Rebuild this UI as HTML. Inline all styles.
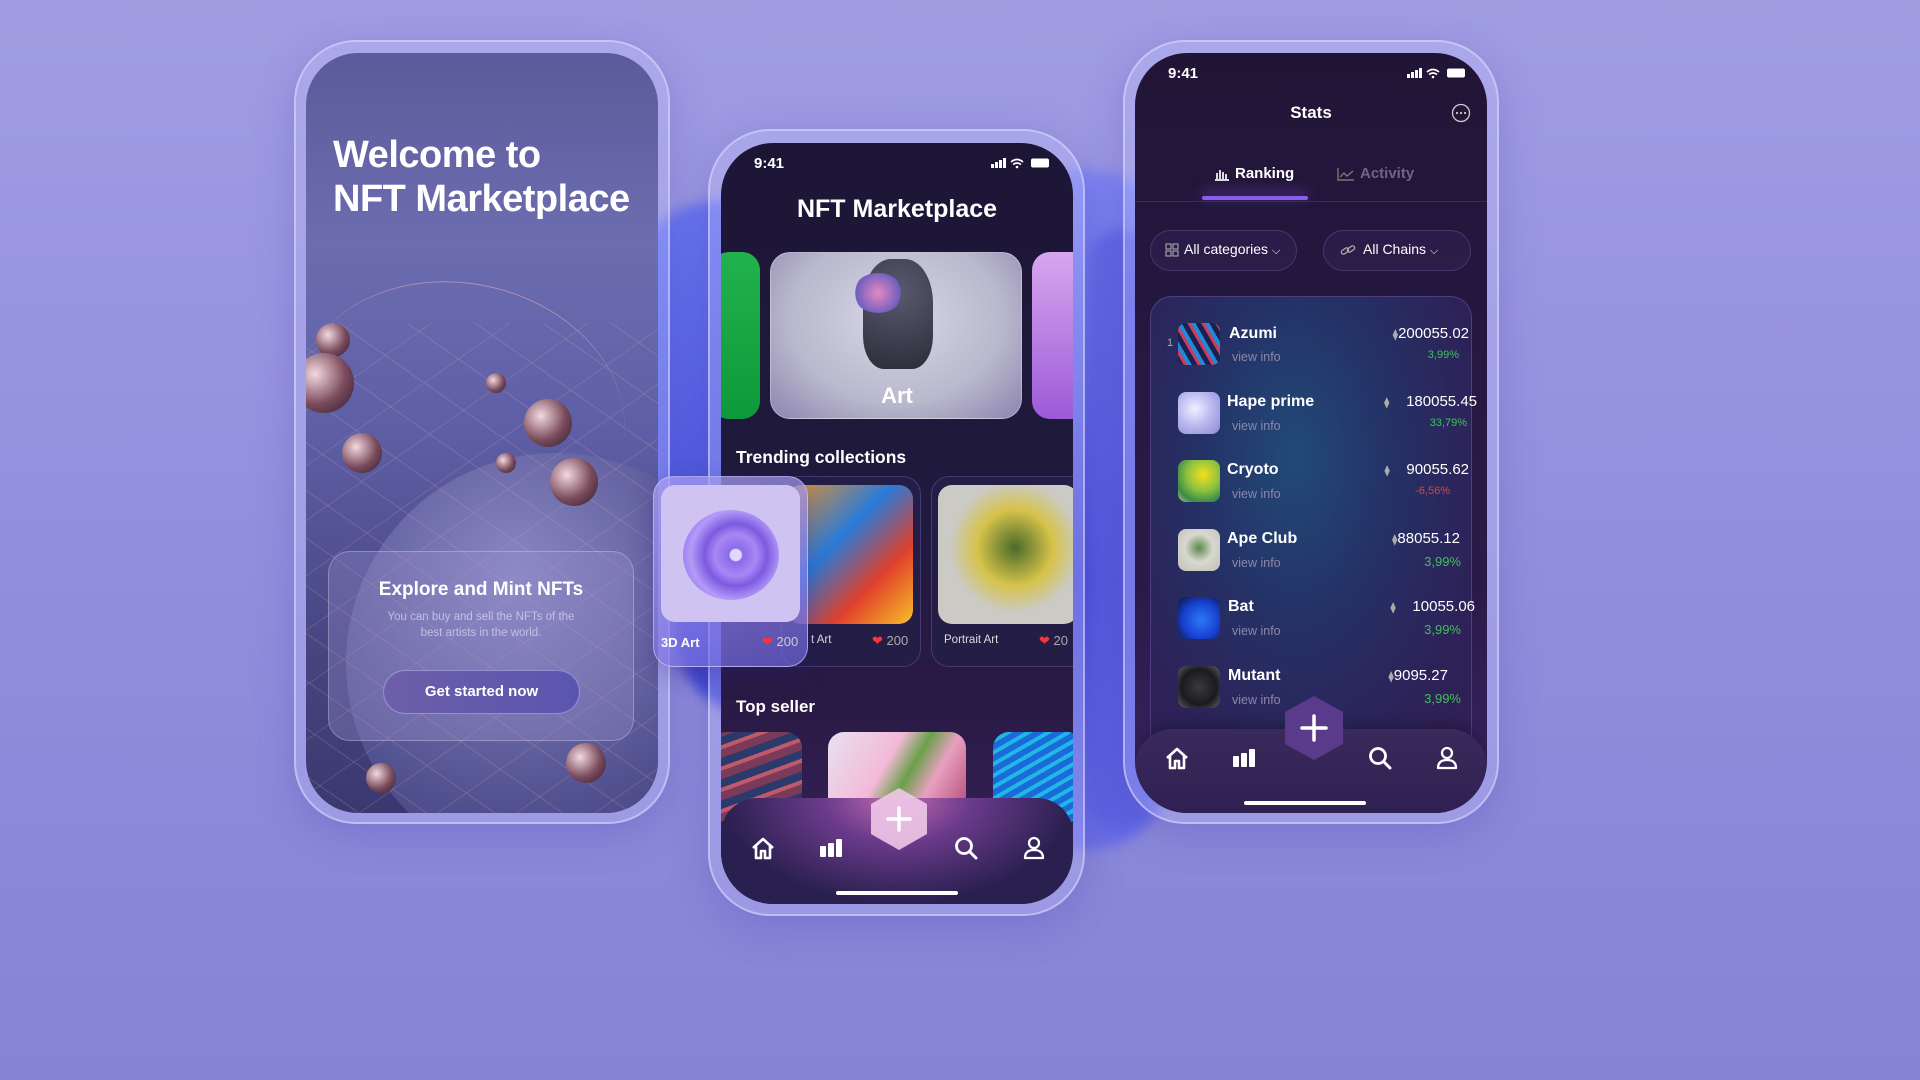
<!DOCTYPE html>
<html><head><meta charset="utf-8"><style>
*{margin:0;padding:0;box-sizing:border-box}
body{width:1920px;height:1080px;overflow:hidden;position:relative;font-family:"Liberation Sans",sans-serif;background:linear-gradient(180deg,#a09de3 0%,#928fdd 50%,#8583d6 100%);color:#fff}
.abs{position:absolute}
.frame{position:absolute;border-radius:62px;background:rgba(200,200,255,.28);border:2px solid rgba(220,220,255,.55);box-shadow:0 10px 40px rgba(70,60,170,.25)}
.screen{position:absolute;border-radius:52px;overflow:hidden}
.t{position:absolute;white-space:nowrap}
.blob{position:absolute;border-radius:50%;filter:blur(6px)}
</style></head><body>

<div class="blob" style="left:650px;top:200px;width:180px;height:520px;background:linear-gradient(160deg,#6a78f0,#3a3fd0);border-radius:90px 40px 40px 90px;transform:rotate(-8deg)"></div>
<div class="blob" style="left:1040px;top:170px;width:130px;height:680px;background:linear-gradient(180deg,#7f86f2,#4a4fd8 60%,#6b6fe6);border-radius:30px 80px 80px 30px"></div>
<div class="blob" style="left:1090px;top:230px;width:60px;height:600px;background:#5a60e0;border-radius:40px;opacity:.7"></div>

<!-- LEFT PHONE -->
<div class="frame" style="left:294px;top:40px;width:376px;height:784px"></div>
<div class="screen" style="left:306px;top:53px;width:352px;height:760px;background:linear-gradient(180deg,#5b5a9a 0%,#6c6db0 25%,#5e5ea6 50%,#45447f 80%,#3a3870 100%)">
  <div class="abs" style="left:-10px;top:230px;width:330px;height:260px;border-top:1px solid rgba(230,170,180,.6);border-radius:50% 50% 0 0;transform:rotate(12deg)"></div>
  <div class="abs" style="left:40px;top:400px;width:420px;height:420px;border-radius:50%;background:radial-gradient(circle at 40% 30%,#8a89c6,#51508e 60%,#3c3a74)"></div>
  <div class="abs" style="left:0;top:270px;width:352px;height:500px;background:repeating-linear-gradient(35deg,transparent 0 38px,rgba(220,160,170,.35) 38px 39px),repeating-linear-gradient(-35deg,transparent 0 44px,rgba(220,160,170,.3) 44px 45px);opacity:.7"></div>
  <div class="abs" style="left:10px;top:270px;width:34px;height:34px;border-radius:50%;background:radial-gradient(circle at 35% 35%,#f3d9e0,#7a4b5c 55%,#2a1b2c)"></div>
  <div class="abs" style="left:-12px;top:300px;width:60px;height:60px;border-radius:50%;background:radial-gradient(circle at 35% 35%,#f3d9e0,#7a4b5c 55%,#2a1b2c)"></div>
  <div class="abs" style="left:36px;top:380px;width:40px;height:40px;border-radius:50%;background:radial-gradient(circle at 35% 35%,#f3d9e0,#7a4b5c 55%,#2a1b2c)"></div>
  <div class="abs" style="left:218px;top:346px;width:48px;height:48px;border-radius:50%;background:radial-gradient(circle at 35% 35%,#f3d9e0,#7a4b5c 55%,#2a1b2c)"></div>
  <div class="abs" style="left:244px;top:405px;width:48px;height:48px;border-radius:50%;background:radial-gradient(circle at 35% 35%,#f3d9e0,#7a4b5c 55%,#2a1b2c)"></div>
  <div class="abs" style="left:180px;top:320px;width:20px;height:20px;border-radius:50%;background:radial-gradient(circle at 35% 35%,#f3d9e0,#7a4b5c 55%,#2a1b2c)"></div>
  <div class="abs" style="left:190px;top:400px;width:20px;height:20px;border-radius:50%;background:radial-gradient(circle at 35% 35%,#f3d9e0,#7a4b5c 55%,#2a1b2c)"></div>
  <div class="abs" style="left:260px;top:690px;width:40px;height:40px;border-radius:50%;background:radial-gradient(circle at 35% 35%,#f3d9e0,#7a4b5c 55%,#2a1b2c)"></div>
  <div class="abs" style="left:60px;top:710px;width:30px;height:30px;border-radius:50%;background:radial-gradient(circle at 35% 35%,#f3d9e0,#7a4b5c 55%,#2a1b2c)"></div>
  <div class="t" style="left:27px;top:80px;font-size:38px;font-weight:900;line-height:44px;letter-spacing:-.5px">Welcome to<br>NFT Marketplace</div>
  <div class="abs" style="left:22px;top:498px;width:306px;height:190px;border-radius:22px;background:rgba(150,140,200,.35);border:1px solid rgba(255,255,255,.25)"></div>
  <div class="t" style="left:22px;width:306px;text-align:center;top:526px;font-size:19px;font-weight:bold">Explore and Mint NFTs</div>
  <div class="t" style="left:22px;width:306px;text-align:center;top:556px;font-size:11.5px;line-height:16px;color:rgba(235,235,255,.6);white-space:normal;padding:0 50px">You can buy and sell the NFTs of the best artists in the world.</div>
  <div class="abs" style="left:77px;top:617px;width:197px;height:44px;border-radius:22px;background:linear-gradient(90deg,#6d5fa8,#5a55b0);border:1.5px solid rgba(200,200,255,.5);text-align:center;line-height:41px;font-size:15px;font-weight:bold">Get started now</div>
</div>

<!-- MIDDLE PHONE -->
<div class="frame" style="left:708px;top:129px;width:377px;height:787px"></div>
<div class="screen" style="left:721px;top:143px;width:352px;height:761px;background:linear-gradient(180deg,#1d1535 0%,#1f1a3d 45%,#2a1a46 75%,#3a2460 100%)">
  <div class="t" style="left:33px;top:12px;font-size:15px;font-weight:bold">9:41</div>
  <svg class="abs" style="left:270px;top:14px" width="70" height="12"><rect x="0" y="7" width="3" height="4" fill="#fff"/><rect x="4" y="5" width="3" height="6" fill="#fff"/><rect x="8" y="3" width="3" height="8" fill="#fff"/><rect x="12" y="1" width="3" height="10" fill="#fff"/><path d="M20 5 Q26 0 32 5 M22 7.5 Q26 4.5 30 7.5" stroke="#fff" stroke-width="1.6" fill="none"/><circle cx="26" cy="10" r="1.3" fill="#fff"/><rect x="40" y="1.5" width="18" height="9" rx="2" fill="#fff"/></svg>
  <div class="t" style="left:0;width:352px;text-align:center;top:52px;font-size:25px;font-weight:bold">NFT Marketplace</div>
  <div class="abs" style="left:-10px;top:109px;width:49px;height:167px;border-radius:18px;background:linear-gradient(180deg,#22b24c,#0d9a3a)"></div>
  <div class="abs" style="left:49px;top:109px;width:252px;height:167px;border-radius:20px;background:radial-gradient(ellipse at 50% 40%,#d8d8e8,#b9b8cc 60%,#8c84b0);border:1px solid rgba(255,255,255,.3);overflow:hidden">
    <div class="abs" style="left:92px;top:6px;width:70px;height:110px;border-radius:40% 40% 30% 30%;background:radial-gradient(circle at 50% 30%,#5a5a70,#2b2b38)"></div>
    <div class="abs" style="left:82px;top:20px;width:50px;height:40px;border-radius:50%;background:radial-gradient(circle,#e28ac0,#6d5dc0 70%,transparent 72%)"></div>
    <div class="t" style="left:0;width:252px;text-align:center;top:130px;font-size:22px;font-weight:bold">Art</div>
  </div>
  <div class="abs" style="left:311px;top:109px;width:60px;height:167px;border-radius:18px;background:linear-gradient(180deg,#d7a6ee,#9d5ad8)"></div>
  <div class="t" style="left:15px;top:304px;font-size:17.5px;font-weight:bold">Trending collections</div>
  <div class="abs" style="left:60px;top:333px;width:140px;height:191px;border-radius:18px;background:#241d46;border:1px solid rgba(140,130,220,.3)"></div>
  <div class="abs" style="left:66px;top:342px;width:126px;height:139px;border-radius:14px;background:linear-gradient(135deg,#e9932a,#2a7ad8 40%,#e0402a 70%,#f7c02a)"></div>
  <div class="t" style="left:90px;top:491px;font-size:11.5px;color:#ddd">t Art</div>
  <div class="t" style="left:151px;top:490px;font-size:13px;color:#f33">❤ <span style="color:#aaa">200</span></div>
  <div class="abs" style="left:210px;top:333px;width:160px;height:191px;border-radius:18px;background:#241d46;border:1px solid rgba(140,130,220,.3)"></div>
  <div class="abs" style="left:217px;top:342px;width:140px;height:139px;border-radius:14px;background:radial-gradient(circle at 55% 45%,#4a6a2a,#d6c34a 35%,#cbcac4 60%)"></div>
  <div class="t" style="left:223px;top:491px;font-size:11.5px;color:#ddd">Portrait Art</div>
  <div class="t" style="left:318px;top:490px;font-size:13px;color:#f33">❤ <span style="color:#aaa">20</span></div>
  <div class="t" style="left:15px;top:554px;font-size:17px;font-weight:bold">Top seller</div>
  <div class="abs" style="left:-10px;top:589px;width:91px;height:90px;border-radius:16px;background:repeating-linear-gradient(160deg,#7a3a5a 0 8px,#2b3a6a 8px 16px,#c05a6a 16px 20px)"></div>
  <div class="abs" style="left:107px;top:589px;width:138px;height:90px;border-radius:16px;background:linear-gradient(120deg,#e8e0f0,#f3b9d8 40%,#6ba04a 55%,#e8a0c0 70%,#b04070)"></div>
  <div class="abs" style="left:272px;top:589px;width:90px;height:90px;border-radius:16px;background:repeating-linear-gradient(150deg,#1a6ad8 0 6px,#20b6e8 6px 10px)"></div>
  <div class="abs" style="left:0;top:655px;width:352px;height:106px;background:radial-gradient(ellipse at 50% 0%,#c06ab0 0%,#6a3a8a 30%,#2a2050 70%);border-radius:36px 36px 0 0"></div>
  <svg class="abs" style="left:147px;top:643px" width="62" height="66"><polygon points="31,2 59,18 59,48 31,64 3,48 3,18" fill="#f0c8e8" opacity=".9"/><path d="M31 22V44M20 33H42" stroke="#fff" stroke-width="3.5" stroke-linecap="round"/></svg>
  <svg class="abs" style="left:29px;top:692px" width="26" height="26"><path d="M3 13 L13 4 L23 13 M6 11V23H11V16H15V23H20V11" stroke="#fff" stroke-width="2.6" fill="none" stroke-linejoin="round"/></svg>
  <svg class="abs" style="left:97px;top:694px" width="26" height="22"><rect x="2" y="9" width="6" height="11" rx="1" fill="#fff"/><rect x="10" y="6" width="6" height="14" rx="1" fill="#fff"/><rect x="18" y="2" width="6" height="18" rx="1" fill="#fff"/></svg>
  <svg class="abs" style="left:232px;top:692px" width="26" height="26"><circle cx="11" cy="11" r="7.5" stroke="#fff" stroke-width="2.8" fill="none"/><path d="M16.5 16.5L23 23" stroke="#fff" stroke-width="3" stroke-linecap="round"/></svg>
  <svg class="abs" style="left:300px;top:692px" width="26" height="26"><circle cx="13" cy="8" r="5" stroke="#fff" stroke-width="2.3" fill="none"/><path d="M4 23 Q4 15 13 15 Q22 15 22 23 Z" stroke="#fff" stroke-width="2.3" fill="none" stroke-linejoin="round"/></svg>
  <div class="abs" style="left:115px;top:748px;width:122px;height:4px;border-radius:2px;background:#fff"></div>
</div>
<!-- floating 3D card -->
<div class="abs" style="left:653px;top:476px;width:155px;height:191px;border-radius:20px;background:linear-gradient(160deg,rgba(170,160,240,.75),rgba(110,100,220,.7));border:1.5px solid rgba(210,205,255,.6);box-shadow:0 8px 24px rgba(40,30,120,.3)"></div>
<div class="abs" style="left:661px;top:485px;width:139px;height:137px;border-radius:14px;background:#cfc3f2;overflow:hidden">
  <div class="abs" style="left:22px;top:25px;width:96px;height:90px;border-radius:50%;background:radial-gradient(circle at 55% 50%,#e0d8ff 0 8%,#8b6ae8 10%,#a887f5 30%,#7c5ae0 45%,#b59af8 65%,#9a7af0 80%)"></div>
</div>
<div class="t" style="left:661px;top:635px;font-size:13px;font-weight:bold">3D Art</div>
<div class="t" style="left:762px;top:634px;font-size:13px;color:#f33">❤ <span style="color:#ccc">200</span></div>

<!-- RIGHT PHONE -->
<div class="frame" style="left:1123px;top:40px;width:376px;height:784px"></div>
<div class="screen" style="left:1135px;top:53px;width:352px;height:760px;background:linear-gradient(180deg,#211536 0%,#24173e 30%,#2a1a4a 70%,#3a2360 100%)">
  <div class="t" style="left:33px;top:12px;font-size:15px;font-weight:bold">9:41</div>
  <svg class="abs" style="left:272px;top:14px" width="70" height="12"><rect x="0" y="7" width="3" height="4" fill="#fff"/><rect x="4" y="5" width="3" height="6" fill="#fff"/><rect x="8" y="3" width="3" height="8" fill="#fff"/><rect x="12" y="1" width="3" height="10" fill="#fff"/><path d="M20 5 Q26 0 32 5 M22 7.5 Q26 4.5 30 7.5" stroke="#fff" stroke-width="1.6" fill="none"/><circle cx="26" cy="10" r="1.3" fill="#fff"/><rect x="40" y="1.5" width="18" height="9" rx="2" fill="#fff"/></svg>
  <div class="t" style="left:0;width:352px;text-align:center;top:50px;font-size:17px;font-weight:bold">Stats</div>
  <svg class="abs" style="left:316px;top:50px" width="20" height="20"><circle cx="10" cy="10" r="8.5" stroke="#ccc" stroke-width="1.3" fill="none"/><circle cx="6" cy="10" r="1.1" fill="#ccc"/><circle cx="10" cy="10" r="1.1" fill="#ccc"/><circle cx="14" cy="10" r="1.1" fill="#ccc"/></svg>
  <svg class="abs" style="left:79px;top:114px" width="16" height="14"><path d="M1 13H15M3 12V6M6 12V3M9 12V5M12 12V7" stroke="#ddd" stroke-width="2"/></svg>
  <div class="t" style="left:100px;top:112px;font-size:15px;font-weight:bold">Ranking</div>
  <svg class="abs" style="left:202px;top:114px" width="18" height="14"><path d="M1 1V13H17M3 10L7 6L10 9L16 4" stroke="#777" stroke-width="1.4" fill="none"/></svg>
  <div class="t" style="left:225px;top:112px;font-size:15px;color:#6d6585;font-weight:bold">Activity</div>
  <div class="abs" style="left:0;top:148px;width:352px;height:1px;background:rgba(255,255,255,.1)"></div>
  <div class="abs" style="left:67px;top:143px;width:106px;height:4px;border-radius:2px;background:#8a5cf0;box-shadow:0 -4px 12px rgba(140,90,240,.6)"></div>
  <div class="abs" style="left:15px;top:177px;width:147px;height:41px;border-radius:21px;border:1px solid rgba(150,130,220,.25);background:rgba(60,40,100,.3)"></div>
  <svg class="abs" style="left:30px;top:190px" width="14" height="14"><g stroke="#aaa" stroke-width="1.1" fill="none"><rect x="1" y="1" width="5" height="5"/><rect x="8" y="1" width="5" height="5"/><rect x="1" y="8" width="5" height="5"/><rect x="8" y="8" width="5" height="5"/></g></svg>
  <div class="t" style="left:49px;top:188px;font-size:14px">All categories <span style="font-size:11px">⌵</span></div>
  <div class="abs" style="left:188px;top:177px;width:148px;height:41px;border-radius:21px;border:1px solid rgba(150,130,220,.25);background:rgba(60,40,100,.3)"></div>
  <svg class="abs" style="left:205px;top:190px" width="16" height="14"><g stroke="#aaa" stroke-width="1.3" fill="none"><rect x="1" y="6" width="8" height="4" rx="2" transform="rotate(-35 5 8)"/><rect x="7" y="4" width="8" height="4" rx="2" transform="rotate(-35 11 6)"/></g></svg>
  <div class="t" style="left:228px;top:188px;font-size:14px">All Chains <span style="font-size:11px">⌵</span></div>
  <div class="abs" style="left:15px;top:243px;width:322px;height:460px;border-radius:22px;border:1px solid rgba(150,130,230,.3);background:radial-gradient(ellipse at 45% 35%,#214a78 0%,#253065 40%,#2d2258 75%,#301f55 100%)"></div>
  <div class="t" style="left:32px;top:284px;font-size:11px;color:#aaa">1</div>
  <div class="abs" style="left:43px;top:270px;width:42px;height:42px;border-radius:8px;background:repeating-linear-gradient(60deg,#1a2050 0 5px,#d03a5a 5px 8px,#1e8ad8 8px 12px)"></div>
  <div class="abs" style="left:43px;top:339px;width:42px;height:42px;border-radius:8px;background:radial-gradient(circle at 40% 40%,#f0f0ff,#b8b6ee 50%,#8a8ad8)"></div>
  <div class="abs" style="left:43px;top:407px;width:42px;height:42px;border-radius:8px;background:radial-gradient(circle at 60% 35%,#f5e01a,#8ac040 45%,#3a8a4a 75%,#bdbd90)"></div>
  <div class="abs" style="left:43px;top:476px;width:42px;height:42px;border-radius:8px;background:radial-gradient(circle at 50% 45%,#5a8a4a,#d8d8d0 45%,#c0c0b8)"></div>
  <div class="abs" style="left:43px;top:544px;width:42px;height:42px;border-radius:8px;background:radial-gradient(circle at 55% 55%,#2a7af8,#1840d0 55%,#0a1430)"></div>
  <div class="abs" style="left:43px;top:613px;width:42px;height:42px;border-radius:8px;background:radial-gradient(circle at 50% 50%,#3a3a3a,#1a1a20 60%,#60606a)"></div>
  <div class="t" style="left:94px;top:272px;font-size:16px;font-weight:bold">Azumi</div>
  <div class="t" style="left:92px;top:340px;font-size:16px;font-weight:bold">Hape prime</div>
  <div class="t" style="left:92px;top:408px;font-size:16px;font-weight:bold">Cryoto</div>
  <div class="t" style="left:92px;top:477px;font-size:16px;font-weight:bold">Ape Club</div>
  <div class="t" style="left:93px;top:545px;font-size:16px;font-weight:bold">Bat</div>
  <div class="t" style="left:93px;top:614px;font-size:16px;font-weight:bold">Mutant</div>
  <div class="t" style="left:97px;top:297px;font-size:12.5px;color:#8d87a8">view info</div>
  <div class="t" style="left:97px;top:366px;font-size:12.5px;color:#8d87a8">view info</div>
  <div class="t" style="left:97px;top:434px;font-size:12.5px;color:#8d87a8">view info</div>
  <div class="t" style="left:97px;top:503px;font-size:12.5px;color:#8d87a8">view info</div>
  <div class="t" style="left:97px;top:571px;font-size:12.5px;color:#8d87a8">view info</div>
  <div class="t" style="left:97px;top:640px;font-size:12.5px;color:#8d87a8">view info</div>
  <div class="t" style="right:18px;top:272px;font-size:15px"><span style="color:#aaa;font-size:11px">⧫</span>200055.02</div>
  <div class="t" style="right:10px;top:340px;font-size:15px"><span style="color:#aaa;font-size:11px">⧫</span>&nbsp;&nbsp;&nbsp;&nbsp;180055.45</div>
  <div class="t" style="right:18px;top:408px;font-size:15px"><span style="color:#aaa;font-size:11px">⧫</span>&nbsp;&nbsp;&nbsp;&nbsp;90055.62</div>
  <div class="t" style="right:27px;top:477px;font-size:15px"><span style="color:#aaa;font-size:11px">⧫</span>88055.12</div>
  <div class="t" style="right:12px;top:545px;font-size:15px"><span style="color:#aaa;font-size:11px">⧫</span>&nbsp;&nbsp;&nbsp;&nbsp;10055.06</div>
  <div class="t" style="right:39px;top:614px;font-size:15px"><span style="color:#aaa;font-size:11px">⧫</span>9095.27</div>
  <div class="t" style="right:28px;top:296px;font-size:11px;color:#3fc05a">3,99%</div>
  <div class="t" style="right:20px;top:364px;font-size:11px;color:#3fc05a">33,79%</div>
  <div class="t" style="right:37px;top:432px;font-size:11px;color:#e04040">-6,56%</div>
  <div class="t" style="right:26px;top:501px;font-size:13px;color:#3fc05a">3,99%</div>
  <div class="t" style="right:26px;top:569px;font-size:13px;color:#3fc05a">3,99%</div>
  <div class="t" style="right:26px;top:638px;font-size:13px;color:#3fc05a">3,99%</div>
  <div class="abs" style="left:0;top:676px;width:352px;height:84px;border-radius:38px 38px 0 0;background:linear-gradient(180deg,#3a2a5c,#2e2050);box-shadow:0 -4px 14px rgba(0,0,0,.25)"></div>
  <svg class="abs" style="left:147px;top:641px" width="64" height="68"><polygon points="32,2 61,18 61,50 32,66 3,50 3,18" fill="#5a3a8a"/><path d="M32 22V46M20 34H44" stroke="#fff" stroke-width="3.5" stroke-linecap="round"/></svg>
  <svg class="abs" style="left:29px;top:692px" width="26" height="26"><path d="M3 13 L13 4 L23 13 M6 11V23H11V16H15V23H20V11" stroke="#fff" stroke-width="2.6" fill="none" stroke-linejoin="round"/></svg>
  <svg class="abs" style="left:96px;top:694px" width="26" height="22"><rect x="2" y="9" width="6" height="11" rx="1" fill="#fff"/><rect x="10" y="6" width="6" height="14" rx="1" fill="#fff"/><rect x="18" y="2" width="6" height="18" rx="1" fill="#fff"/></svg>
  <svg class="abs" style="left:232px;top:692px" width="26" height="26"><circle cx="11" cy="11" r="7.5" stroke="#fff" stroke-width="2.8" fill="none"/><path d="M16.5 16.5L23 23" stroke="#fff" stroke-width="3" stroke-linecap="round"/></svg>
  <svg class="abs" style="left:299px;top:692px" width="26" height="26"><circle cx="13" cy="8" r="5" stroke="#fff" stroke-width="2.3" fill="none"/><path d="M4 23 Q4 15 13 15 Q22 15 22 23 Z" stroke="#fff" stroke-width="2.3" fill="none" stroke-linejoin="round"/></svg>
  <div class="abs" style="left:109px;top:748px;width:122px;height:4px;border-radius:2px;background:#fff"></div>
</div>
</body></html>
